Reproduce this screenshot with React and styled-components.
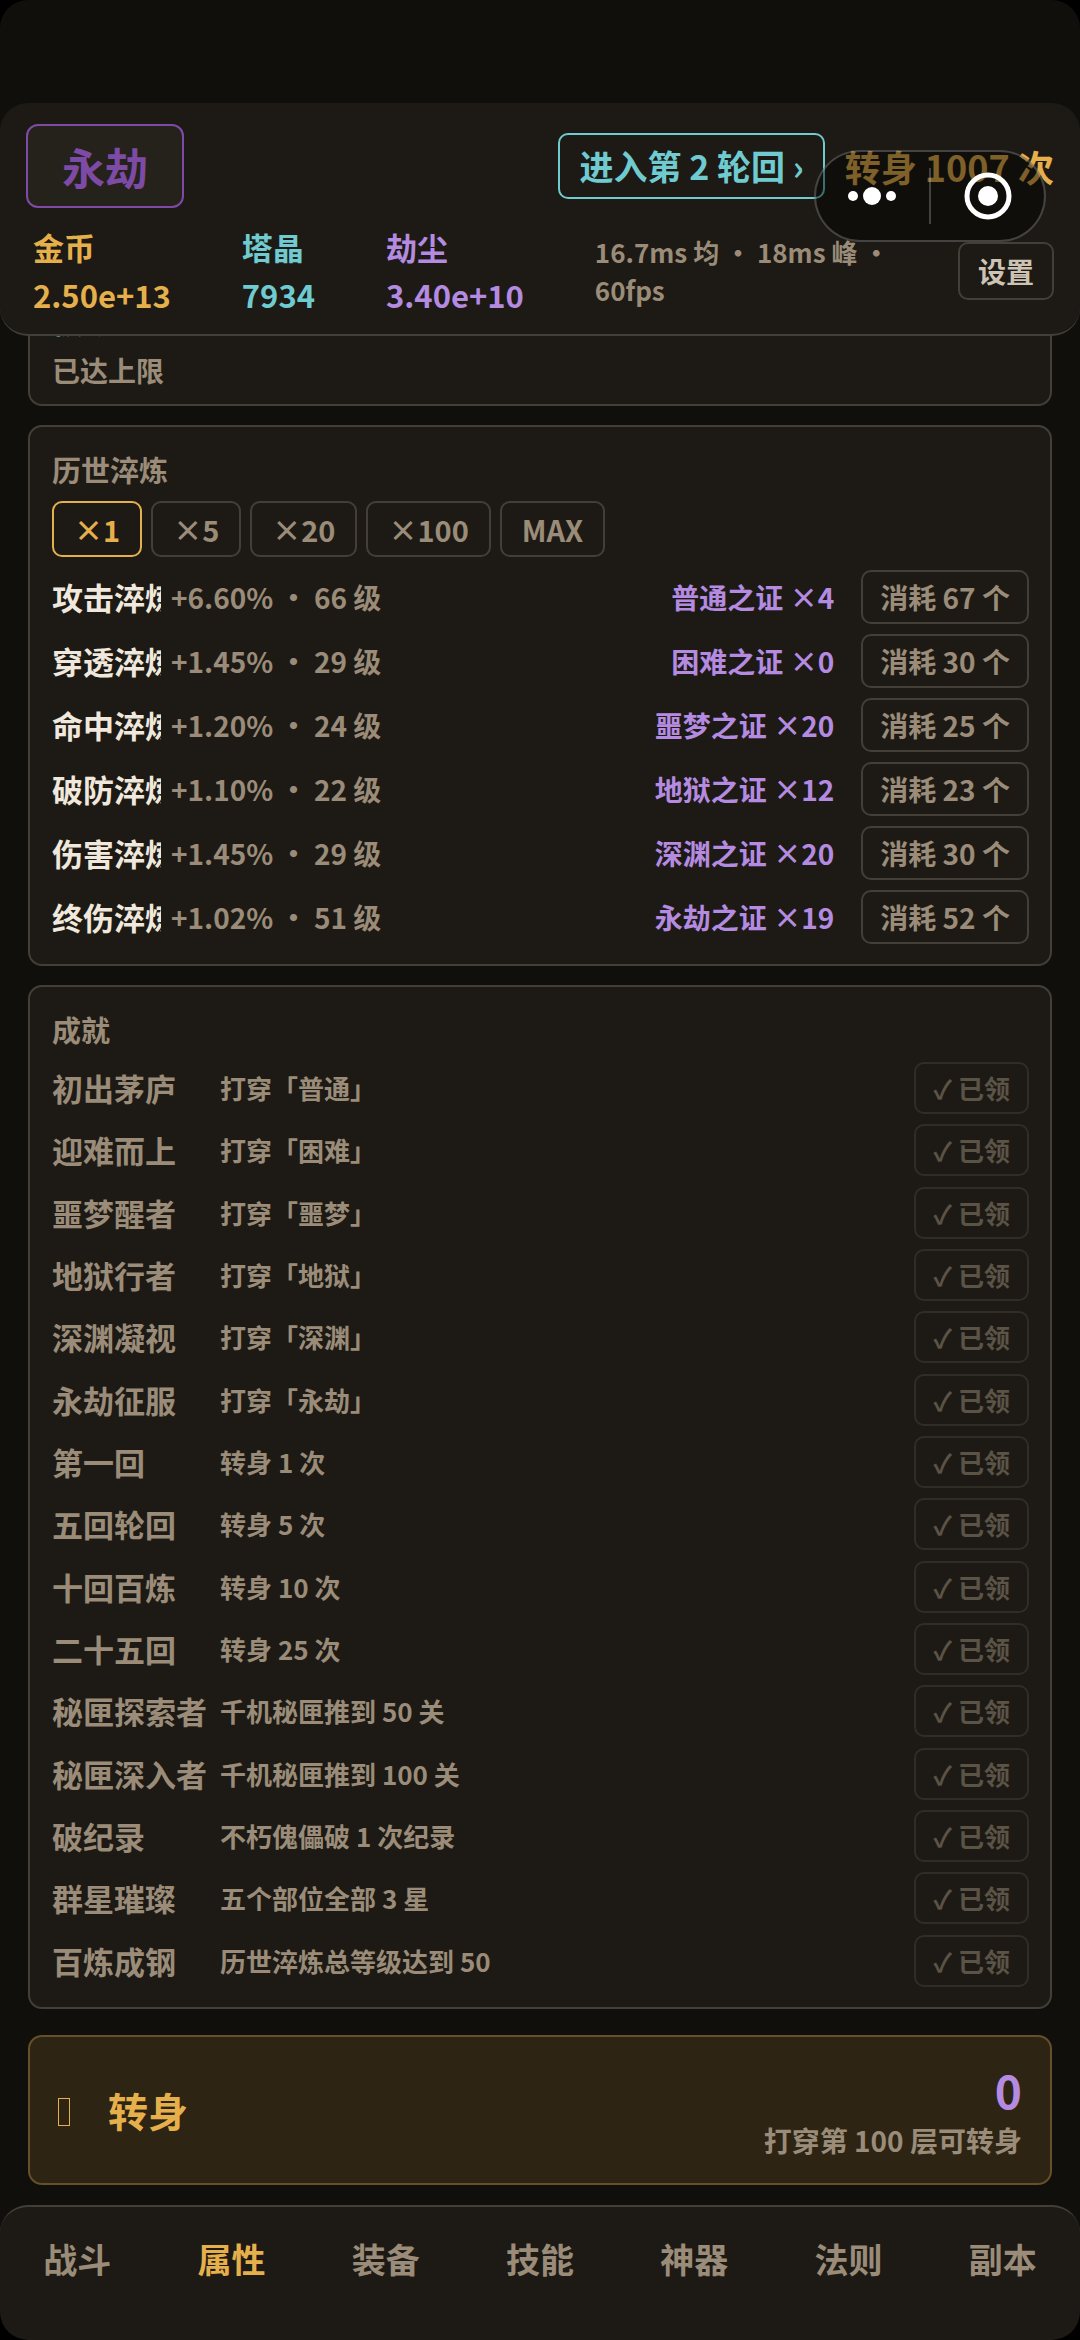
import React, { useState } from "react";
import styled, { createGlobalStyle, css } from "styled-components";

const GlobalStyle = createGlobalStyle`
  * {
    box-sizing: border-box;
  }
  body {
    margin: 0;
    background: #000;
    color: #9a8c78;
    font-family: "Noto Sans CJK SC", sans-serif;
    font-weight: 700;
    font-size: 28px;
    line-height: 40px;
  }
  button {
    font: inherit;
    color: inherit;
    background: none;
    cursor: pointer;
    white-space: nowrap;
  }
`;

const colors = {
  gold: "#e5b04c",
  cyan: "#6fcbd0",
  purple: "#b48be0",
  violet: "#7d4ba5",
  light: "#f0e8dc",
  dim: "#9a8c78",
  line: "#433e37",
  panel: "#1d1a15",
  page: "#100f0c",
};

const Screen = styled.div`
  min-height: 100vh;
  display: flex;
  flex-direction: column;
  background: ${colors.page};
  border-radius: 28px;
  overflow: hidden;
`;

const Header = styled.header`
  position: relative;
  z-index: 1;
  margin-top: 103px;
  padding: 21px 26px 15px;
  background: ${colors.panel};
  border-bottom: 2px solid ${colors.line};
  border-radius: 28px;
`;

const TitleBar = styled.div`
  display: flex;
  align-items: center;
  justify-content: space-between;
`;

const TitleSide = styled.div`
  display: flex;
  align-items: center;
  gap: 20px;
`;

const Difficulty = styled.button`
  padding: 8px 34px;
  border: 2px solid ${colors.violet};
  border-radius: 12px;
  background: #25221b;
  color: ${colors.violet};
  font-size: 43px;
  line-height: 64px;
`;

const CycleButton = styled.button`
  padding: 8px 19px;
  border: 2px solid ${colors.cyan};
  border-radius: 10px;
  color: ${colors.cyan};
  font-size: 34px;
  line-height: 46px;
`;

const RebirthCount = styled.span`
  color: ${colors.gold};
  font-size: 36px;
`;

const StatBar = styled.div`
  display: flex;
  align-items: center;
  gap: 71px;
  margin-top: 15px;
  padding-left: 7px;
`;

const Stat = styled.div`
  color: ${(props) => props.$color};
  font-size: 31px;
  line-height: 48px;
`;

const Perf = styled.div`
  flex: 1;
  margin-right: -20px;
  font-size: 26px;
  line-height: 38px;
`;

const Settings = styled.button`
  padding: 7px 18px;
  border: 2px solid ${colors.line};
  border-radius: 10px;
  color: #cdc3b4;
`;

// floats over the header like the host app's own menu
const Capsule = styled.div`
  position: absolute;
  top: 47px;
  right: 34px;
  width: 232px;
  height: 92px;
  display: flex;
  align-items: center;
  border: 2px solid rgba(255, 255, 255, 0.22);
  border-radius: 46px;
  background: rgba(0, 0, 0, 0.45);
`;

const CapsuleButton = styled.button`
  flex: 1;
  display: flex;
  justify-content: center;
  padding: 0;
  border: none;
  & + & {
    border-left: 2px solid rgba(255, 255, 255, 0.22);
  }
`;

const Main = styled.main`
  flex: 1;
  display: flex;
  flex-direction: column;
  gap: 19px;
  padding: 0 28px;
`;

const Card = styled.section`
  display: flex;
  flex-direction: column;
  padding: 22px 21px 15px 22px;
  background: ${colors.panel};
  border: 2px solid ${colors.line};
  border-radius: 14px;
  ${(props) =>
    props.$scrolled &&
    css`
      margin-top: -53px;
      padding: 14px 22px;
    `}
  ${(props) =>
    props.$grow &&
    css`
      flex: 1;
    `}
`;

const LimitTitle = styled.div`
  display: flex;
  gap: 60px;
  margin-bottom: 9px;
  color: ${colors.cyan};
  font-size: 31px;
  line-height: 42px;
`;

const CardTitle = styled.h2`
  margin: 0;
  font-size: 29px;
  line-height: 40px;
`;

const Steps = styled.div`
  display: flex;
  gap: 9px;
  margin: 12px 0 8px;
`;

const StepButton = styled.button`
  padding: 6px 20px;
  border: 2px solid ${(props) => (props.$on ? colors.gold : colors.line)};
  border-radius: 10px;
  color: ${(props) => (props.$on ? colors.gold : colors.dim)};
  font-size: 29px;
`;

const RefineRow = styled.div`
  display: flex;
  align-items: center;
  height: 64px;
`;

const RefineName = styled.span`
  width: 109px;
  margin-right: 10px;
  overflow: hidden;
  white-space: nowrap;
  color: ${colors.light};
  font-size: 31px;
`;

const RefineLevel = styled.span`
  flex: 1;
`;

const Proof = styled.span`
  margin-right: 27px;
  color: ${colors.purple};
`;

const CostButton = styled.button`
  padding: 5px 17px;
  border: 2px solid ${colors.line};
  border-radius: 10px;
`;

const Achievements = styled.ul`
  flex: 1;
  display: grid;
  grid-auto-rows: 1fr;
  margin: 8px 0 0;
  padding: 0;
  list-style: none;
`;

const Achievement = styled.li`
  display: grid;
  grid-template-columns: 158px 1fr auto;
  align-items: center;
  gap: 10px;
  min-height: 62px;
  font-size: 26px;
`;

const AchievementName = styled.span`
  white-space: nowrap;
  font-size: 31px;
`;

const Claimed = styled.button`
  padding: 4px 17px;
  border: 2px solid ${colors.line};
  border-radius: 10px;
  opacity: 0.5;
`;

const Rebirth = styled.button`
  display: flex;
  align-items: center;
  margin: 7px 0 20px;
  padding: 23px 28px;
  border: 2px solid #66502a;
  border-radius: 14px;
  background: #2d2414;
`;

const Glyph = styled.span`
  width: 12px;
  height: 28px;
  margin: 4px 38px 0 0;
  border: 1px solid ${colors.gold};
`;

const RebirthLabel = styled.span`
  flex: 1;
  text-align: left;
  color: ${colors.gold};
  font-size: 40px;
`;

const RebirthInfo = styled.span`
  display: flex;
  flex-direction: column;
  align-items: flex-end;
  gap: 2px;
`;

const RebirthGain = styled.span`
  color: ${colors.purple};
  font-size: 46px;
  line-height: 58px;
`;

const TabBar = styled.nav`
  display: flex;
  padding: 27px 0 56px;
  background: ${colors.panel};
  border-top: 2px solid ${colors.line};
  border-radius: 28px;
`;

const Tab = styled.button`
  flex: 1;
  padding: 0;
  border: none;
  color: ${(props) => (props.$on ? colors.gold : colors.dim)};
  font-size: 34px;
  line-height: 50px;
`;

const steps = ["×1", "×5", "×20", "×100", "MAX"];

const refines = [
  { name: "攻击淬炼", bonus: "+6.60%", level: 66, proof: "普通之证", have: 4, cost: 67 },
  { name: "穿透淬炼", bonus: "+1.45%", level: 29, proof: "困难之证", have: 0, cost: 30 },
  { name: "命中淬炼", bonus: "+1.20%", level: 24, proof: "噩梦之证", have: 20, cost: 25 },
  { name: "破防淬炼", bonus: "+1.10%", level: 22, proof: "地狱之证", have: 12, cost: 23 },
  { name: "伤害淬炼", bonus: "+1.45%", level: 29, proof: "深渊之证", have: 20, cost: 30 },
  { name: "终伤淬炼", bonus: "+1.02%", level: 51, proof: "永劫之证", have: 19, cost: 52 },
];

const achievements = [
  ["初出茅庐", "打穿「普通」"],
  ["迎难而上", "打穿「困难」"],
  ["噩梦醒者", "打穿「噩梦」"],
  ["地狱行者", "打穿「地狱」"],
  ["深渊凝视", "打穿「深渊」"],
  ["永劫征服", "打穿「永劫」"],
  ["第一回", "转身 1 次"],
  ["五回轮回", "转身 5 次"],
  ["十回百炼", "转身 10 次"],
  ["二十五回", "转身 25 次"],
  ["秘匣探索者", "千机秘匣推到 50 关"],
  ["秘匣深入者", "千机秘匣推到 100 关"],
  ["破纪录", "不朽傀儡破 1 次纪录"],
  ["群星璀璨", "五个部位全部 3 星"],
  ["百炼成钢", "历世淬炼总等级达到 50"],
];

const tabs = ["战斗", "属性", "装备", "技能", "神器", "法则", "副本"];

const App = () => {
  const [step, setStep] = useState("×1");
  const [tab, setTab] = useState("属性");

  return (
    <Screen>
      <GlobalStyle />
      <Header>
        <TitleBar>
          <Difficulty>永劫</Difficulty>
          <TitleSide>
            <CycleButton>进入第 2 轮回 ›</CycleButton>
            <RebirthCount>转身 1007 次</RebirthCount>
          </TitleSide>
        </TitleBar>
        <StatBar>
          <Stat $color={colors.gold}>
            金币
            <br />
            2.50e+13
          </Stat>
          <Stat $color={colors.cyan}>
            塔晶
            <br />
            7934
          </Stat>
          <Stat $color={colors.purple}>
            劫尘
            <br />
            3.40e+10
          </Stat>
          <Perf>16.7ms 均 · 18ms 峰 · 60fps</Perf>
          <Settings>设置</Settings>
        </StatBar>
        <Capsule>
          <CapsuleButton aria-label="更多">
            <svg width="50" height="18" viewBox="0 0 50 18" fill="#fff">
              <circle cx="5" cy="9" r="5" />
              <circle cx="24" cy="9" r="9" />
              <circle cx="43" cy="9" r="5" />
            </svg>
          </CapsuleButton>
          <CapsuleButton aria-label="关闭">
            <svg width="50" height="56" viewBox="0 0 50 56">
              <circle cx="25" cy="28" r="21" fill="none" stroke="#fff" strokeWidth="5" />
              <circle cx="25" cy="28" r="10" fill="#fff" />
            </svg>
          </CapsuleButton>
        </Capsule>
      </Header>

      <Main>
        <Card $scrolled>
          <LimitTitle>
            <span>被动</span>
            <span>4</span>
          </LimitTitle>
          <div>已达上限</div>
        </Card>

        <Card>
          <CardTitle>历世淬炼</CardTitle>
          <Steps>
            {steps.map((s) => (
              <StepButton key={s} $on={s === step} onClick={() => setStep(s)}>
                {s}
              </StepButton>
            ))}
          </Steps>
          {refines.map((r) => (
            <RefineRow key={r.name}>
              <RefineName>{r.name}</RefineName>
              <RefineLevel>
                {r.bonus} · {r.level} 级
              </RefineLevel>
              <Proof>
                {r.proof} ×{r.have}
              </Proof>
              <CostButton>消耗 {r.cost} 个</CostButton>
            </RefineRow>
          ))}
        </Card>

        <Card $grow>
          <CardTitle>成就</CardTitle>
          <Achievements>
            {achievements.map(([name, goal]) => (
              <Achievement key={name}>
                <AchievementName>{name}</AchievementName>
                <span>{goal}</span>
                <Claimed disabled>✓ 已领</Claimed>
              </Achievement>
            ))}
          </Achievements>
        </Card>

        <Rebirth>
          <Glyph />
          <RebirthLabel>转身</RebirthLabel>
          <RebirthInfo>
            <RebirthGain>0</RebirthGain>
            <span>打穿第 100 层可转身</span>
          </RebirthInfo>
        </Rebirth>
      </Main>

      <TabBar>
        {tabs.map((t) => (
          <Tab key={t} $on={t === tab} onClick={() => setTab(t)}>
            {t}
          </Tab>
        ))}
      </TabBar>
    </Screen>
  );
};

export default App;
